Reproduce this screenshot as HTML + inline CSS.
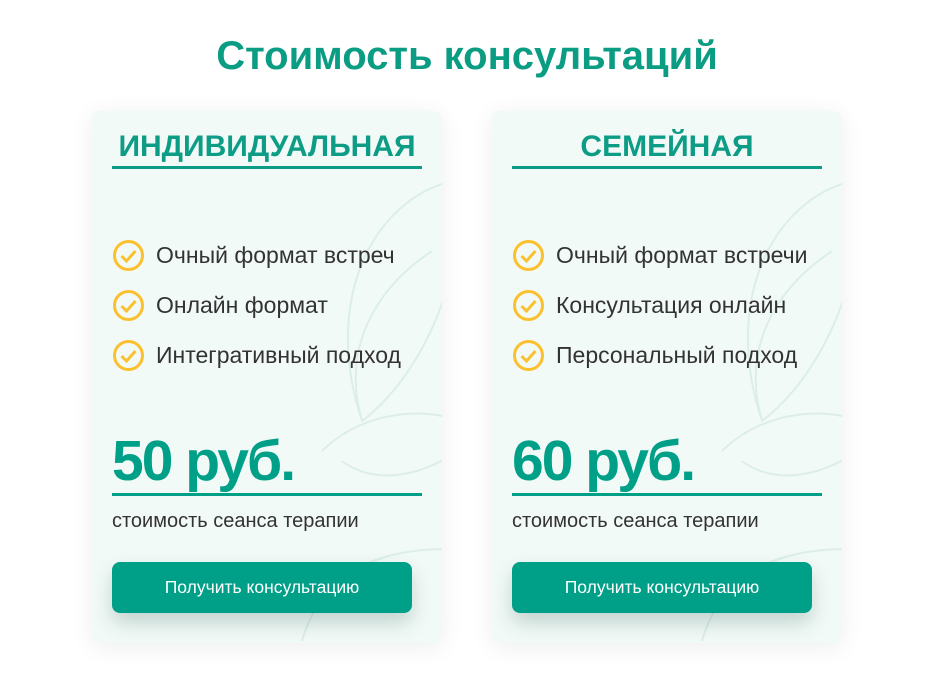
<!DOCTYPE html><html><head><meta charset="utf-8"><style>
body{margin:0;width:930px;height:688px;background:#fff;font-family:"Liberation Sans",sans-serif;position:relative;overflow:hidden}
h1{position:absolute;top:34px;left:0;width:934px;text-align:center;margin:0;font-size:40px;color:#0b9c84;font-weight:bold}
.card{position:absolute;top:111px;width:350px;height:532px;background:#f2faf7;border-radius:8px;box-shadow:0 4px 25px rgba(0,0,0,0.07);overflow:hidden}
.hd{position:absolute;left:20px;top:19px;width:310px;text-align:center;font-size:30px;font-weight:bold;color:#0d9c85;line-height:34px;border-bottom:3px solid #0a9c85;padding-bottom:2px}
.li{position:absolute;left:20px;font-size:23px;color:#333;display:flex;align-items:center}
.li svg{margin-right:11px}
.pr{position:absolute;left:20px;top:318px;width:310px;font-size:57px;font-weight:bold;color:#009f88;border-bottom:3px solid #009f88;line-height:64px;letter-spacing:-2px}
.sub{position:absolute;left:20px;top:399px;font-size:20px;color:#333}
.btn{position:absolute;left:20px;top:451px;width:300px;height:51px;background:#009f88;border-radius:8px;color:#fff;font-size:17.5px;text-align:center;line-height:51px;box-shadow:0 10px 20px rgba(0,60,50,0.2)}
.deco{position:absolute;right:-40px;top:60px}
</style></head><body>
<h1>Стоимость консультаций</h1>
<div class="card" style="left:92px">
<svg class="deco" width="200" height="480" fill="none" stroke="#dceee9" stroke-width="2"><path d="M170 10C90 30 40 130 80 250C120 220 170 150 180 40M80 250C60 180 90 120 150 80M40 280C80 240 150 230 200 260C160 300 100 320 60 290M20 470C40 400 100 370 200 380"/></svg>
<div class="hd">ИНДИВИДУАЛЬНАЯ</div>
<div class="li" style="top:128px"><svg width="33" height="33"><circle cx="16.5" cy="16.5" r="14" fill="none" stroke="#fbc02d" stroke-width="3"/><path d="M9.5 17l5 5 9-10" fill="none" stroke="#fbc02d" stroke-width="3"/></svg>Очный формат встреч</div>
<div class="li" style="top:178px"><svg width="33" height="33"><circle cx="16.5" cy="16.5" r="14" fill="none" stroke="#fbc02d" stroke-width="3"/><path d="M9.5 17l5 5 9-10" fill="none" stroke="#fbc02d" stroke-width="3"/></svg>Онлайн формат</div>
<div class="li" style="top:228px"><svg width="33" height="33"><circle cx="16.5" cy="16.5" r="14" fill="none" stroke="#fbc02d" stroke-width="3"/><path d="M9.5 17l5 5 9-10" fill="none" stroke="#fbc02d" stroke-width="3"/></svg>Интегративный подход</div>
<div class="pr">50 руб.</div>
<div class="sub">стоимость сеанса терапии</div>
<div class="btn">Получить консультацию</div>
</div>
<div class="card" style="left:492px">
<svg class="deco" width="200" height="480" fill="none" stroke="#dceee9" stroke-width="2"><path d="M170 10C90 30 40 130 80 250C120 220 170 150 180 40M80 250C60 180 90 120 150 80M40 280C80 240 150 230 200 260C160 300 100 320 60 290M20 470C40 400 100 370 200 380"/></svg>
<div class="hd">СЕМЕЙНАЯ</div>
<div class="li" style="top:128px"><svg width="33" height="33"><circle cx="16.5" cy="16.5" r="14" fill="none" stroke="#fbc02d" stroke-width="3"/><path d="M9.5 17l5 5 9-10" fill="none" stroke="#fbc02d" stroke-width="3"/></svg>Очный формат встречи</div>
<div class="li" style="top:178px"><svg width="33" height="33"><circle cx="16.5" cy="16.5" r="14" fill="none" stroke="#fbc02d" stroke-width="3"/><path d="M9.5 17l5 5 9-10" fill="none" stroke="#fbc02d" stroke-width="3"/></svg>Консультация онлайн</div>
<div class="li" style="top:228px"><svg width="33" height="33"><circle cx="16.5" cy="16.5" r="14" fill="none" stroke="#fbc02d" stroke-width="3"/><path d="M9.5 17l5 5 9-10" fill="none" stroke="#fbc02d" stroke-width="3"/></svg>Персональный подход</div>
<div class="pr">60 руб.</div>
<div class="sub">стоимость сеанса терапии</div>
<div class="btn">Получить консультацию</div>
</div>
</body></html>
